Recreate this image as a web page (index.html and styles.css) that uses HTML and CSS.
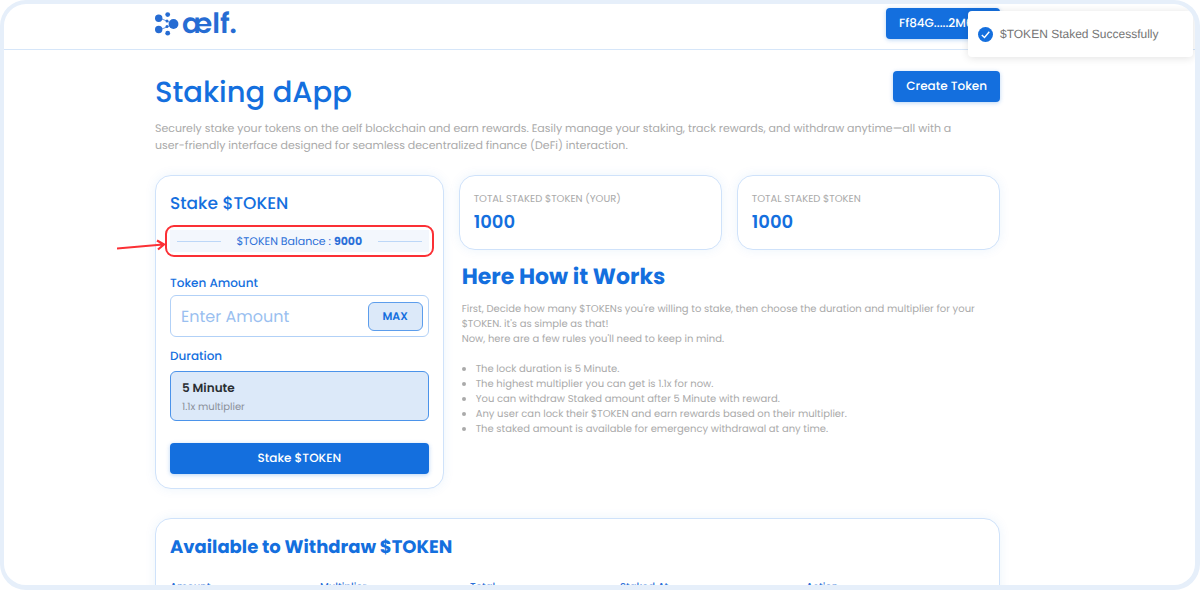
FILE: index.html
```html
<!DOCTYPE html>
<html lang="en">
<head>
<meta charset="utf-8">
<meta name="viewport" content="width=device-width, initial-scale=1">
<title>Staking dApp</title>
<link rel="stylesheet" href="styles.css">
</head>
<body>
<div class="frame">
  <header class="header">
    <div class="logo">
      <svg class="logo-mark" viewBox="0 0 24 24" aria-hidden="true">
        <g fill="none" stroke="currentColor" stroke-width="0.700">
          <path d="M4 6L12 9L18 12M4 18L12 15L18 12"/>
        </g>
        <g fill="currentColor">
          <circle cx="3.700" cy="6.200" r="3.700"/>
          <circle cx="3.700" cy="17.500" r="3.700"/>
          <circle cx="12.700" cy="2.600" r="2.400"/>
          <circle cx="12.700" cy="21.200" r="2.400"/>
          <circle cx="12" cy="9" r="1.500"/>
          <circle cx="12" cy="14.600" r="1.500"/>
          <circle cx="18.500" cy="12" r="4.900"/>
        </g>
      </svg>
      <span class="logo-word">ælf.</span>
    </div>
    <button class="btn btn-wallet" type="button">Ff84G.....2M6</button>
  </header>

  <main class="page">
    <div class="title-row">
      <h1 class="title">Staking dApp</h1>
      <button class="btn" type="button">Create Token</button>
    </div>
    <p class="intro">Securely stake your tokens on the aelf blockchain and earn rewards. Easily manage your staking, track rewards, and withdraw anytime—all with a user-friendly interface designed for seamless decentralized finance (DeFi) interaction.</p>

    <div class="columns">
      <section class="card stake">
        <h2 class="stake-title">Stake $TOKEN</h2>
        <div class="balance">
          <span class="rule"></span>
          <span>$TOKEN Balance : <b>9000</b></span>
          <span class="rule"></span>
          <span class="highlight"></span>
          <svg class="arrow" viewBox="0 0 50 14" aria-hidden="true">
            <path d="M0 9.500L46 5.500M40 1.500L47 5.500L41 10.500" fill="none" stroke="currentColor" stroke-width="2.200"/>
          </svg>
        </div>
        <label class="label" for="amount">Token Amount</label>
        <div class="field">
          <input class="input" id="amount" type="text" placeholder="Enter Amount">
          <button class="max" type="button">MAX</button>
        </div>
        <div class="label" id="duration-label">Duration</div>
        <button class="duration" type="button" aria-describedby="duration-label">
          <span class="duration-name">5 Minute</span>
          <span class="duration-note">1.1x multiplier</span>
        </button>
        <button class="btn btn-wide" type="button">Stake $TOKEN</button>
      </section>

      <div class="side">
        <div class="stats">
          <section class="card stat">
            <h3 class="stat-label">TOTAL STAKED $TOKEN (YOUR)</h3>
            <p class="stat-value">1000</p>
          </section>
          <section class="card stat">
            <h3 class="stat-label">TOTAL STAKED $TOKEN</h3>
            <p class="stat-value">1000</p>
          </section>
        </div>
        <section class="how">
          <h2 class="how-title">Here How it Works</h2>
          <p class="how-text">First, Decide how many $TOKENs you're willing to stake, then choose the duration and multiplier for your $TOKEN. it's as simple as that!<br>Now, here are a few rules you'll need to keep in mind.</p>
          <ul class="rules">
            <li>The lock duration is 5 Minute.</li>
            <li>The highest multiplier you can get is 1.1x for now.</li>
            <li>You can withdraw Staked amount after 5 Minute with reward.</li>
            <li>Any user can lock their $TOKEN and earn rewards based on their multiplier.</li>
            <li>The staked amount is available for emergency withdrawal at any time.</li>
          </ul>
        </section>
      </div>
    </div>

    <section class="card withdraw">
      <h2 class="withdraw-title">Available to Withdraw $TOKEN</h2>
      <table class="table">
        <thead>
          <tr><th>Amount</th><th>Multiplier</th><th>Total</th><th class="col-date">Staked At</th><th class="col-action">Action</th></tr>
        </thead>
      </table>
    </section>
  </main>

  <div class="toast" role="status">
    <svg class="toast-icon" viewBox="0 0 15 15" aria-hidden="true">
      <circle cx="7.500" cy="7.500" r="7.500" fill="currentColor"/>
      <path d="M3.800 8L6.500 10.500L11.300 4.800" fill="none" stroke="#fff" stroke-width="1.400"/>
    </svg>
    <span>$TOKEN Staked Successfully</span>
  </div>
</div>
</body>
</html>
```
FILE: styles.css
```css
* {
  box-sizing: border-box;
}

body {
  margin: 0;
  background: #fff;
  color: #aaa;
  font-family: Poppins, Inter, sans-serif;
  font-size: 11px;
  text-rendering: geometricPrecision;
}

h1, h2, h3, p, ul {
  margin: 0;
}

button, input {
  font-family: inherit;
  text-rendering: inherit;
}

.frame {
  position: relative;
  height: 100vh;
  overflow: hidden;
  border: solid #e6effa;
  border-width: 4px 5px 5px 4px;
  border-radius: 26px;
  background: #fff;
}

.header {
  display: flex;
  align-items: center;
  justify-content: space-between;
  height: 46px;
  padding: 0 195px 6px 151px;
  border-bottom: 1px solid #d6e6f9;
}

.logo {
  display: flex;
  align-items: center;
  gap: 3px;
  color: #266cd3;
}

.logo-mark {
  width: 24px;
  height: 24px;
}

.logo-word {
  font-size: 28px;
  font-weight: 600;
  line-height: 32px;
}

.btn {
  height: 31px;
  padding: 1px 13px 0;
  border: 0;
  border-radius: 4px;
  background: #146fde;
  color: #fff;
  font-size: 12px;
  font-weight: 500;
  white-space: nowrap;
  box-shadow: 0 1px 4px rgba(20, 111, 222, 0.3);
}

.btn-wallet {
  min-width: 114px;
  text-align: left;
}

.btn-wide {
  width: 100%;
}

.page {
  padding: 21px 195px 0 151px;
}

.title-row {
  display: flex;
  align-items: flex-start;
  justify-content: space-between;
}

.title {
  color: #146fde;
  font-size: 29px;
  font-weight: 500;
  line-height: 44px;
}

.intro {
  margin-top: 5px;
  padding-right: 24px;
  font-size: 11px;
  line-height: 17px;
}

.columns {
  display: grid;
  grid-template-columns: minmax(0, 289fr) minmax(0, 542fr);
  gap: 15px;
  margin-top: 21px;
}

.card {
  border: 1px solid #cfe2fa;
  border-radius: 16px;
  background: #fff;
  box-shadow: 0 0 12px rgba(20, 111, 222, 0.08);
}

.stake {
  padding: 14px;
}

.stake-title {
  color: #146fde;
  font-size: 17px;
  font-weight: 500;
  line-height: 26px;
}

.balance {
  position: relative;
  display: flex;
  align-items: center;
  justify-content: space-between;
  height: 22px;
  margin: 14px 0 22px;
  padding: 0 7px;
  background: #f3f7fd;
  color: #2b6fd8;
}

.rule {
  width: 44px;
  height: 1px;
  background: #bcd7f8;
}

.highlight {
  position: absolute;
  inset: -5px;
  border: 2px solid #fb3035;
  border-radius: 9px;
}

.arrow {
  position: absolute;
  top: 9px;
  left: -53px;
  width: 50px;
  height: 14px;
  color: #fb3035;
}

.label {
  display: block;
  color: #146fde;
  font-size: 12px;
  font-weight: 500;
  line-height: 20px;
}

.field {
  display: flex;
  align-items: center;
  height: 42px;
  margin: 1px 0 10px;
  padding: 0 5px 0 10px;
  border: 1px solid #b2d1f7;
  border-radius: 6px;
}

.input {
  flex: 1;
  min-width: 0;
  padding: 0;
  border: 0;
  outline: 0;
  background: none;
  color: #146fde;
  font-size: 16px;
}

.input::placeholder {
  color: #9abff0;
}

.max {
  width: 55px;
  height: 29px;
  padding: 0;
  border: 1px solid #5c9dec;
  border-radius: 6px;
  background: #dce9f9;
  color: #146fde;
  font-size: 11px;
  font-weight: 600;
}

.duration {
  display: flex;
  flex-direction: column;
  justify-content: center;
  gap: 3px;
  width: 100%;
  height: 50px;
  margin: 4px 0 22px;
  padding: 2px 11px 0;
  border: 1px solid #4b93ea;
  border-radius: 6px;
  background: #dce9f9;
  text-align: left;
}

.duration-name {
  color: #2a2e33;
  font-size: 12px;
  font-weight: 600;
  line-height: 16px;
}

.duration-note {
  color: #8b9099;
  font-size: 10px;
  line-height: 14px;
}

.stats {
  display: grid;
  grid-template-columns: 1fr 1fr;
  gap: 15px;
}

.stat {
  height: 75px;
  padding: 14px;
}

.stat-label {
  font-size: 10px;
  font-weight: 400;
  line-height: 18px;
}

.stat-value {
  margin-top: 3px;
  color: #146fde;
  font-size: 18px;
  font-weight: 600;
  line-height: 24px;
}

.how {
  padding: 12px 3px 0;
  font-size: 10px;
  line-height: 15px;
}

.how-title {
  color: #146fde;
  font-size: 22px;
  font-weight: 700;
  line-height: 30px;
}

.how-text {
  margin: 9px 0 15px;
}

.rules {
  padding-left: 14px;
}

.withdraw {
  height: 240px;
  margin-top: 29px;
  padding: 14px;
}

.withdraw-title {
  color: #146fde;
  font-size: 18px;
  font-weight: 700;
  line-height: 30px;
}

.table {
  width: 100%;
  margin-top: 16px;
  border-spacing: 0;
  table-layout: fixed;
  color: #2b6fd8;
}

.table th {
  width: 150px;
  padding: 0;
  font-size: 10px;
  font-weight: 500;
  line-height: 16px;
  text-align: left;
}

.table .col-date {
  width: 186px;
}

.table .col-action {
  width: auto;
}

.toast {
  position: absolute;
  top: 7px;
  right: 2px;
  display: flex;
  align-items: center;
  gap: 7px;
  width: 225px;
  height: 46px;
  padding: 0 10px;
  border-radius: 4px;
  background: #fff;
  color: #757575;
  font-family: "Liberation Sans", sans-serif;
  font-size: 12px;
  box-shadow: 0 1px 8px rgba(0, 0, 0, 0.12);
}

.toast-icon {
  width: 15px;
  height: 15px;
  color: #146fde;
}
```
